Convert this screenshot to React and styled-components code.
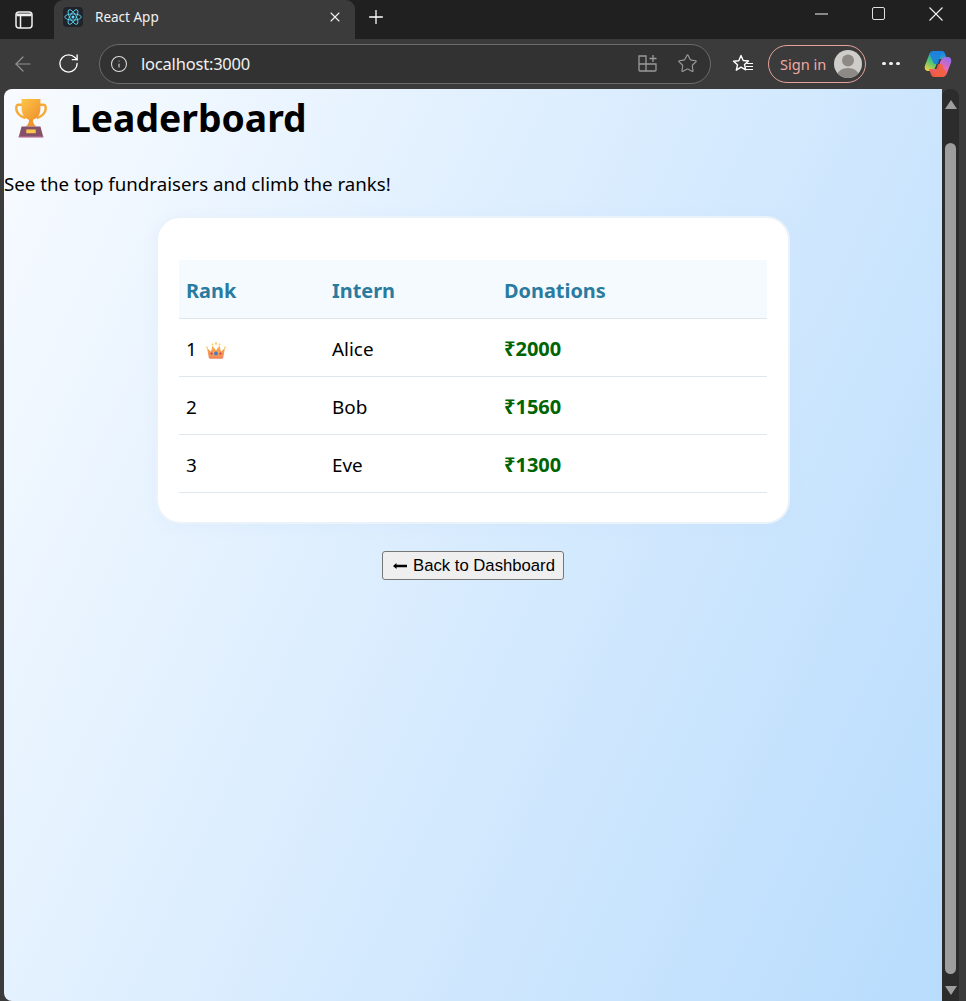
import styled, { createGlobalStyle } from "styled-components";
import { Plus, X, Info, Star, RotateCw, ArrowLeft } from "lucide-react";

const interns = [
  { rank: 1, name: "Alice", amount: 2000 },
  { rank: 2, name: "Bob", amount: 1560 },
  { rank: 3, name: "Eve", amount: 1300 },
];

const GlobalStyle = createGlobalStyle`
  html, body {
    margin: 0;
    padding: 0;
    background: #3b3b3b;
    overflow: hidden;
  }
  * {
    box-sizing: border-box;
  }
`;

const Browser = styled.div`
  display: flex;
  flex-direction: column;
  width: 966px;
  height: 1001px;
  overflow: hidden;
  background: #3b3b3b;
  font-family: "Noto Sans", "Open Sans", sans-serif;
`;

const TitleBar = styled.div`
  display: flex;
  align-items: flex-end;
  flex: 0 0 39px;
  background: #202020;
  color: #fff;
`;

const SidebarButton = styled.div`
  display: flex;
  justify-content: center;
  align-items: center;
  width: 54px;
  height: 39px;
  padding-right: 6px;
`;

const Tab = styled.div`
  display: flex;
  align-items: center;
  width: 301px;
  height: 39px;
  padding: 0 12px 5px 9px;
  background: #3b3b3b;
  border-radius: 9px 9px 0 0;
  font-size: 13.5px;
  color: #f2f2f2;
`;

const Favicon = styled.div`
  display: flex;
  justify-content: center;
  align-items: center;
  width: 20px;
  height: 20px;
  margin-right: 12px;
  background: #20232a;
  border-radius: 4px;
`;

const TabTitle = styled.span`
  flex: 1;
`;

const NewTab = styled.div`
  display: flex;
  justify-content: center;
  align-items: center;
  width: 42px;
  height: 39px;
  padding-bottom: 5px;
`;

const WindowControls = styled.div`
  display: flex;
  margin-left: auto;
  height: 39px;
  padding: 0 23px 12px 0;
  align-items: center;
  gap: 44px;
`;

const Toolbar = styled.div`
  display: flex;
  align-items: center;
  flex: 0 0 50px;
  padding: 0 0 1px 9px;
  background: #3b3b3b;
  color: #fff;
`;

const NavButton = styled.div`
  display: flex;
  justify-content: center;
  align-items: center;
  width: 28px;
  margin-right: 17px;
  opacity: ${(p) => (p.$dim ? 0.45 : 1)};
`;

const AddressBar = styled.div`
  display: flex;
  flex: 0 0 612px;
  align-items: center;
  height: 40px;
  padding: 0 12px 0 10px;
  background: #323232;
  border: 1px solid #6b6b6b;
  border-radius: 20px;
`;

const Url = styled.span`
  flex: 1;
  margin-left: 13px;
  font-size: 16.5px;
  letter-spacing: -0.2px;
  color: #f0f0f0;
`;

const AddressIcons = styled.div`
  display: flex;
  align-items: center;
  gap: 19px;
  color: #9a9a9a;
`;

const FavoritesButton = styled.div`
  display: flex;
  flex: 0 0 22px;
  margin-left: 21px;
`;

const SignIn = styled.div`
  display: flex;
  flex: 0 0 98px;
  align-items: center;
  justify-content: space-between;
  height: 38px;
  margin-left: 14px;
  padding: 0 3px 0 11px;
  border: 1.5px solid #e5a29b;
  border-radius: 19px;
  font-size: 14.6px;
  color: #eea9a2;
`;

const MoreButton = styled.div`
  display: flex;
  gap: 3.5px;
  margin-left: 16px;
`;

const Dot = styled.span`
  width: 3.5px;
  height: 3.5px;
  background: #f0f0f0;
  border-radius: 50%;
`;

const CopilotButton = styled.div`
  display: flex;
  flex: 0 0 28px;
  margin-left: 24px;
`;

const Content = styled.div`
  display: flex;
  flex: 1;
  min-height: 0;
  padding-left: 4px;
`;

const Page = styled.main`
  width: 938px;
  border-radius: 8px 0 0 8px;
  background: linear-gradient(115deg, #f8fbff 0%, #b8dcfd 100%);
  color: #000;
  font-family: "Noto Sans", "Open Sans", sans-serif;
  text-align: center;
`;

const Heading = styled.h1`
  display: flex;
  align-items: center;
  height: 57px;
  margin: 0;
  padding: 0 0 0 10px;
  font-size: 37.3px;
  font-weight: 700;
`;

const HeadingText = styled.span`
  margin-left: 22px;
`;

const Intro = styled.p`
  margin: 24px 0 18px;
  height: 28px;
  line-height: 28px;
  font-size: 18.7px;
  text-align: left;
`;

const Card = styled.section`
  width: 634px;
  height: 308px;
  margin: 0 auto 27px;
  padding: 42px 21px 0;
  background: #fff;
  border: 2px solid #eaf2fa;
  border-radius: 24px;
  box-shadow: 0 2px 12px rgba(200, 225, 250, 0.25);
`;

const Table = styled.table`
  width: 588px;
  border-collapse: collapse;
  table-layout: fixed;
`;

const HeadCell = styled.th`
  width: ${(p) => p.$width}px;
  height: 58px;
  padding: 3px 7px 0;
  background: #f5faff;
  border-bottom: 1px solid #dfe6ec;
  color: #2a7ba0;
  font-size: 19.9px;
  font-weight: 700;
  text-align: left;
`;

const Cell = styled.td`
  height: 58px;
  padding: 3px 7px 0;
  border-bottom: 1px solid #dfe6ec;
  font-size: 18.9px;
  text-align: left;
`;

const Amount = styled(Cell)`
  padding-top: 2px;
  color: #006400;
  font-size: 20px;
  font-weight: 700;
`;

const Crown = styled.svg`
  margin-left: 9px;
  vertical-align: -3px;
`;

const BackButton = styled.button`
  display: inline-flex;
  align-items: center;
  justify-content: center;
  gap: 6px;
  width: 182px;
  height: 29px;
  padding: 1px 0 0 2px;
  background: #efefef;
  border: 1px solid #767676;
  border-radius: 3px;
  color: #000;
  font-family: "Liberation Sans", Arial, sans-serif;
  font-size: 16.7px;
`;

const Scrollbar = styled.div`
  flex: 0 0 17px;
  display: flex;
  flex-direction: column;
  align-items: center;
  background: #2c2c2c;
  border-radius: 8px 8px 0 0;
`;

const ScrollArrow = styled.div`
  width: 0;
  height: 0;
  margin: ${(p) => (p.$down ? "12px 0 0" : "11px 0 0")};
  border-left: 6.5px solid transparent;
  border-right: 6.5px solid transparent;
  ${(p) =>
    p.$down ? "border-top: 9px solid #9e9e9e;" : "border-bottom: 9px solid #9e9e9e;"}
`;

const ScrollThumb = styled.div`
  flex: 0 0 831px;
  width: 11px;
  margin-top: 34px;
  background: #9e9e9e;
  border-radius: 6px;
`;

const Trophy = () => (
  <svg width="34" height="40" viewBox="0 0 36 42" preserveAspectRatio="none">
    <defs>
      <linearGradient id="cup" x1="0" y1="0" x2="1" y2="1">
        <stop offset="0" stopColor="#fdc64a" />
        <stop offset="1" stopColor="#ef8e2c" />
      </linearGradient>
    </defs>
    <path
      d="M9 7H5C2 7 2 11 3 14c1.500 3.500 5 6 9 7"
      fill="none"
      stroke="#f5ab38"
      strokeWidth="2.600"
    />
    <path
      d="M27 7h4c3 0 3 4 2 7-1.500 3.500-5 6-9 7"
      fill="none"
      stroke="#f5ab38"
      strokeWidth="2.600"
    />
    <path d="M8 1h20v10c0 7-4 12-10 12S8 18 8 11z" fill="url(#cup)" />
    <path d="M16 22h4c0 4 1 6 4 8H12c3-2 4-4 4-8z" fill="#f0982f" />
    <path d="M8 30h20l3 11H5z" fill="#84506a" />
    <rect x="5" y="40" width="26" height="1.500" fill="#a9678c" />
    <rect x="13" y="33" width="10" height="4" fill="#fbc64e" />
  </svg>
);

const CrownIcon = () => (
  <Crown width="20" height="17" viewBox="0 0 20 17">
    <defs>
      <linearGradient id="crown" x1="0" y1="0" x2="0" y2="1">
        <stop offset="0" stopColor="#f8b64a" />
        <stop offset="1" stopColor="#ee7f5c" />
      </linearGradient>
    </defs>
    <path
      d="M3 16.500 1 6l4 3.500L6.500 3.500 10 8.500l3.500-5L15 9.500 19 6l-2 10.500z"
      fill="url(#crown)"
    />
    <path d="M3.500 10h13l-.8 6.500H4.300z" fill="url(#crown)" />
    <circle cx="1" cy="5.500" r="1" fill="#f9cf6b" />
    <circle cx="6.500" cy="2.500" r="1" fill="#f9cf6b" />
    <circle cx="10" cy="1.500" r="1.200" fill="#f9cf6b" />
    <circle cx="13.500" cy="2.500" r="1" fill="#f9cf6b" />
    <circle cx="19" cy="5.500" r="1" fill="#f9cf6b" />
    <circle cx="10" cy="11.500" r="2" fill="#4f77c9" />
    <circle cx="5.500" cy="11.500" r="1.200" fill="#d9425f" />
    <circle cx="14.500" cy="11.500" r="1.200" fill="#d9425f" />
  </Crown>
);

const ReactLogo = () => (
  <svg width="18" height="18" viewBox="-12 -12 24 24" fill="none" stroke="#61dafb" strokeWidth="1.100">
    <ellipse rx="11" ry="4.200" />
    <ellipse rx="11" ry="4.200" transform="rotate(60)" />
    <ellipse rx="11" ry="4.200" transform="rotate(120)" />
    <circle r="2" fill="#61dafb" stroke="none" />
  </svg>
);

const SidebarIcon = () => (
  <svg width="18" height="18" viewBox="0 0 18 18" fill="none" stroke="#f0f0f0" strokeWidth="1.500">
    <rect x="1" y="1" width="16" height="16" rx="3" />
    <path d="M1.500 4.500h15M5.500 5v12" />
    <path d="M2 2.500h14V5H2z" fill="#f0f0f0" stroke="none" />
  </svg>
);

const ExtensionsIcon = () => (
  <svg width="20" height="19" viewBox="0 0 20 19" fill="none" stroke="currentColor" strokeWidth="1.300">
    <path d="M1 2h7v15H2a1 1 0 0 1-1-1zM8 10h10v6a1 1 0 0 1-1 1H8M1 10h7" />
    <path d="M15 1v7M11.500 4.500h7" />
  </svg>
);

const FavoritesIcon = () => (
  <svg width="22" height="20" viewBox="0 0 22 20" fill="none" stroke="#fff" strokeWidth="1.400" strokeLinejoin="round">
    <path d="M9 1.500l2.200 5 5.300.5-4 3.600 1.200 5.300L9 13.200l-4.700 3 1.200-5.400-4-3.600 5.300-.5z" />
    <path d="M14.500 9.500H21M13.500 12.500H21M13.500 15.500H21" strokeWidth="1.200" />
  </svg>
);

const Avatar = () => (
  <svg width="28" height="28" viewBox="0 0 28 28">
    <defs>
      <clipPath id="avatar">
        <circle cx="14" cy="14" r="14" />
      </clipPath>
    </defs>
    <circle cx="14" cy="14" r="14" fill="#cfcdc9" />
    <g clipPath="url(#avatar)" fill="#8d8a86">
      <circle cx="14" cy="10.500" r="6" />
      <ellipse cx="14" cy="26" rx="11" ry="8" />
    </g>
  </svg>
);

const ArrowGlyph = () => (
  <svg width="14" height="8" viewBox="0 0 14 8">
    <path d="M0 4 3.500 1v1.800H14v2.400H3.500V7z" fill="#000" />
  </svg>
);

const CopilotLogo = () => (
  <svg width="28" height="28" viewBox="0 0 28 28">
    <defs>
      <linearGradient id="left" x1="0.100" y1="1" x2="0.700" y2="0">
        <stop offset="0" stopColor="#f6cf3a" />
        <stop offset="0.45" stopColor="#46c47a" />
        <stop offset="1" stopColor="#1a86ea" />
      </linearGradient>
      <linearGradient id="right" x1="0.300" y1="1" x2="0.900" y2="0">
        <stop offset="0" stopColor="#f2543a" />
        <stop offset="0.5" stopColor="#e66bb4" />
        <stop offset="1" stopColor="#8e6cf2" />
      </linearGradient>
    </defs>
    <path d="M10 1h8c1.500 0 2.500 1 3 2.500L23 9H14l-2 6.500c-1 3-2.500 5.500-6 5.500H4c-2.500 0-4-2.500-3-5.500L5 5c1-2.500 2.500-4 5-4z" fill="url(#left)" />
    <path d="M18 27h-8c-1.500 0-2.500-1-3-2.500L5 19h9l2-6.500c1-3 2.500-5.500 6-5.500h2c2.500 0 4 2.500 3 5.500L23 23c-1 2.500-2.500 4-5 4z" fill="url(#right)" />
    <path d="M10 27h8c2 0 3.500-1 4.500-3L18 14h-4l-1 3-1.500 5c-.5 2-1 4-1.500 5z" fill="#f2603c" opacity="0.85" />
    <path d="M18 1h-8C8 1 6.500 2 5.500 4L10 14h4l1-3 1.500-5c.5-2 1-4 1.500-5z" fill="#1b7fe0" opacity="0.85" />
  </svg>
);

const App = () => {
  return (
    <Browser>
      <GlobalStyle />
      <TitleBar>
        <SidebarButton>
          <SidebarIcon />
        </SidebarButton>
        <Tab>
          <Favicon>
            <ReactLogo />
          </Favicon>
          <TabTitle>React App</TabTitle>
          <X size={16} strokeWidth={1.6} />
        </Tab>
        <NewTab>
          <Plus size={22} strokeWidth={1.4} />
        </NewTab>
        <WindowControls>
          <svg width="13" height="2" viewBox="0 0 13 2">
            <path d="M0 1h13" stroke="#f0f0f0" strokeWidth="1" />
          </svg>
          <svg width="13" height="13" viewBox="0 0 13 13">
            <rect x="0.500" y="0.500" width="12" height="12" rx="1.500" fill="none" stroke="#e0e0e0" />
          </svg>
          <svg width="14" height="14" viewBox="0 0 14 14">
            <path d="M.5.500l13 13M13.500.500l-13 13" stroke="#f0f0f0" strokeWidth="1.100" />
          </svg>
        </WindowControls>
      </TitleBar>
      <Toolbar>
        <NavButton $dim>
          <ArrowLeft size={24} strokeWidth={1.2} />
        </NavButton>
        <NavButton>
          <RotateCw size={23} strokeWidth={1.4} />
        </NavButton>
        <AddressBar>
          <Info size={18} strokeWidth={1.4} color="#dcdcdc" />
          <Url>localhost:3000</Url>
          <AddressIcons>
            <ExtensionsIcon />
            <Star size={21} strokeWidth={1.3} />
          </AddressIcons>
        </AddressBar>
        <FavoritesButton>
          <FavoritesIcon />
        </FavoritesButton>
        <SignIn>
          Sign in
          <Avatar />
        </SignIn>
        <MoreButton>
          <Dot />
          <Dot />
          <Dot />
        </MoreButton>
        <CopilotButton>
          <CopilotLogo />
        </CopilotButton>
      </Toolbar>
      <Content>
        <Page>
          <Heading>
            <Trophy />
            <HeadingText>Leaderboard</HeadingText>
          </Heading>
          <Intro>See the top fundraisers and climb the ranks!</Intro>
          <Card>
            <Table>
              <thead>
                <tr>
                  <HeadCell $width={146}>Rank</HeadCell>
                  <HeadCell $width={172}>Intern</HeadCell>
                  <HeadCell $width={270}>Donations</HeadCell>
                </tr>
              </thead>
              <tbody>
                {interns.map((intern) => (
                  <tr key={intern.rank}>
                    <Cell>
                      {intern.rank}
                      {intern.rank === 1 && <CrownIcon />}
                    </Cell>
                    <Cell>{intern.name}</Cell>
                    <Amount>₹{intern.amount}</Amount>
                  </tr>
                ))}
              </tbody>
            </Table>
          </Card>
          <BackButton>
            <ArrowGlyph />
            Back to Dashboard
          </BackButton>
        </Page>
        <Scrollbar>
          <ScrollArrow />
          <ScrollThumb />
          <ScrollArrow $down />
        </Scrollbar>
      </Content>
    </Browser>
  );
};

export default App;
